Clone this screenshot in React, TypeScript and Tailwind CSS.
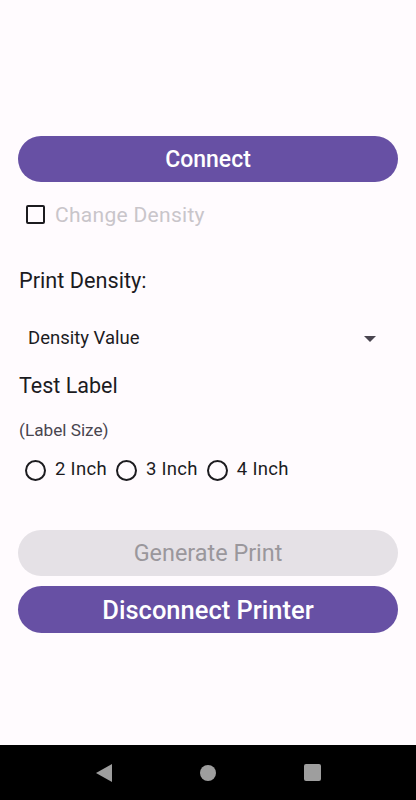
export default function App() {
  const font = { fontFamily: "Roboto, 'Noto Sans', sans-serif" };
  return (
    <div className="w-[416px] h-[800px] flex flex-col bg-[#fffbfe] overflow-hidden" style={font}>
      <div className="flex-1 flex flex-col px-[18px] pt-[136px]">
        <button className="h-[46px] w-full rounded-full bg-[#6750a4] text-white text-[23px] leading-[28px] font-medium flex items-center justify-center pt-[1px]">
          Connect
        </button>
        <div className="flex items-center mt-[22px] ml-[8px] h-[20px]">
          <div className="w-[19px] h-[19px] border-2 border-[#1c1b1f] rounded-[2px] shrink-0" />
          <span className="ml-[10px] text-[21px] leading-[24px] text-[#c9c5ca] tracking-[0.3px] pt-[2px]">Change Density</span>
        </div>
        <div className="mt-[44px] text-[21.7px] text-[#1c1b1f] leading-[26px] ml-[1px]">Print Density:</div>
        <div className="mt-[33px] flex items-center justify-between h-[24px] ml-[10px] mr-[22px]">
          <span className="text-[18.5px] text-[#1c1b1f]">Density Value</span>
          <svg width="12" height="6" viewBox="0 0 12 6"><path d="M0 0h12L6 6z" fill="#49454f" /></svg>
        </div>
        <div className="mt-[22px] text-[21.5px] text-[#1c1b1f] leading-[26px] ml-[1px]">Test Label</div>
        <div className="mt-[21px] text-[17.2px] text-[#49454f] leading-[20px] ml-[1px]">(Label Size)</div>
        <div className="mt-[19px] flex items-center ml-[7px] h-[22px]">
          {["2 Inch", "3 Inch", "4 Inch"].map((t) => (
            <div key={t} className="flex items-center mr-[9px]">
              <div className="w-[21px] h-[21px] rounded-full border-2 border-[#1c1b1f] shrink-0" />
              <span className="ml-[9px] text-[18.5px] text-[#1c1b1f] tracking-[0.3px]">{t}</span>
            </div>
          ))}
        </div>
        <button className="mt-[49px] h-[46px] w-full rounded-full bg-[#e5e1e6] text-[#9a979c] text-[23.4px] leading-[28px] flex items-center justify-center">
          Generate Print
        </button>
        <button className="mt-[10px] h-[47px] w-full rounded-full bg-[#6750a4] text-white text-[25.5px] leading-[30px] font-medium flex items-center justify-center">
          Disconnect Printer
        </button>
      </div>
      <div className="h-[55px] bg-black flex items-center justify-center">
        <div className="flex items-center">
          <div className="w-[104px] flex justify-center">
            <svg width="16" height="18" viewBox="0 0 16 18"><path d="M16 0v18L0 9z" fill="#9e9e9e" /></svg>
          </div>
          <div className="w-[104px] flex justify-center">
            <div className="w-[16px] h-[16px] rounded-full bg-[#9e9e9e]" />
          </div>
          <div className="w-[104px] flex justify-center">
            <div className="w-[17px] h-[17px] rounded-[2px] bg-[#9e9e9e]" />
          </div>
        </div>
      </div>
    </div>
  );
}
